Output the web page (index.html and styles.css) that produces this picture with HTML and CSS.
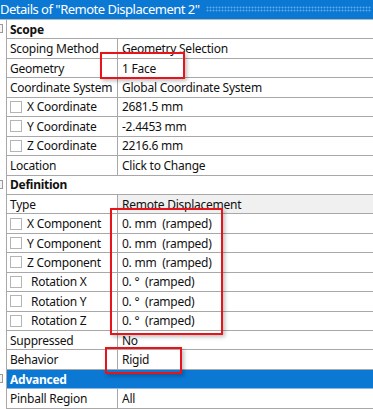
FILE: index.html
```html
<!DOCTYPE html>
<html lang="en">
<head>
  <meta charset="UTF-8" />
  <title>Details of "Remote Displacement 2"</title>
  <link rel="stylesheet" href="styles.css">
</head>
<body>

<div class="panel">
  <div class="titlebar">
    <span class="title">Details of "Remote Displacement 2"</span>
    <span class="grip"></span>
  </div>

  <div class="row group">
    <div class="gutter"><span class="toggle"></span></div>
    <div class="head">Scope</div>
  </div>
  <div class="row">
    <div class="gutter"></div>
    <div class="label">Scoping Method</div>
    <div class="value">Geometry Selection</div>
  </div>
  <div class="row">
    <div class="gutter"></div>
    <div class="label">Geometry</div>
    <div class="value">1 Face</div>
  </div>
  <div class="row">
    <div class="gutter"></div>
    <div class="label">Coordinate System</div>
    <div class="value">Global Coordinate System</div>
  </div>
  <div class="row">
    <div class="gutter"></div>
    <div class="label"><span class="check"></span>X Coordinate</div>
    <div class="value">2681.5 mm</div>
  </div>
  <div class="row">
    <div class="gutter"></div>
    <div class="label"><span class="check"></span>Y Coordinate</div>
    <div class="value">-2.4453 mm</div>
  </div>
  <div class="row">
    <div class="gutter"></div>
    <div class="label"><span class="check"></span>Z Coordinate</div>
    <div class="value">2216.6 mm</div>
  </div>
  <div class="row">
    <div class="gutter"></div>
    <div class="label">Location</div>
    <div class="value">Click to Change</div>
  </div>

  <div class="row group">
    <div class="gutter"><span class="toggle"></span></div>
    <div class="head">Definition</div>
  </div>
  <div class="row">
    <div class="gutter"></div>
    <div class="label">Type</div>
    <div class="value readonly">Remote Displacement</div>
  </div>
  <div class="row">
    <div class="gutter"></div>
    <div class="label"><span class="check"></span>X Component</div>
    <div class="value">0. mm&nbsp; (ramped)</div>
  </div>
  <div class="row">
    <div class="gutter"></div>
    <div class="label"><span class="check"></span>Y Component</div>
    <div class="value">0. mm&nbsp; (ramped)</div>
  </div>
  <div class="row">
    <div class="gutter"></div>
    <div class="label"><span class="check"></span>Z Component</div>
    <div class="value">0. mm&nbsp; (ramped)</div>
  </div>
  <div class="row">
    <div class="gutter"></div>
    <div class="label"><span class="check wide"></span>Rotation X</div>
    <div class="value">0. °&nbsp; (ramped)</div>
  </div>
  <div class="row">
    <div class="gutter"></div>
    <div class="label"><span class="check wide"></span>Rotation Y</div>
    <div class="value">0. °&nbsp; (ramped)</div>
  </div>
  <div class="row">
    <div class="gutter"></div>
    <div class="label"><span class="check wide"></span>Rotation Z</div>
    <div class="value">0. °&nbsp; (ramped)</div>
  </div>
  <div class="row">
    <div class="gutter"></div>
    <div class="label">Suppressed</div>
    <div class="value">No</div>
  </div>
  <div class="row">
    <div class="gutter"></div>
    <div class="label">Behavior</div>
    <div class="value">Rigid</div>
  </div>

  <div class="row group selected">
    <div class="gutter"><span class="toggle"></span></div>
    <div class="head">Advanced</div>
  </div>
  <div class="row">
    <div class="gutter"></div>
    <div class="label">Pinball Region</div>
    <div class="value">All</div>
  </div>

  <!-- annotation boxes -->
  <div class="mark mark-geometry"></div>
  <div class="mark mark-components"></div>
  <div class="mark mark-behavior"></div>
</div>

</body>
</html>
```

FILE: styles.css
```css
body {
  margin: 0;
  background: #ffffff;
  font-family: "Noto Sans", "Open Sans", sans-serif;
  font-size: 12px;
  letter-spacing: -0.25px;
  color: #111;
  overflow: hidden;
}
.panel {
  position: relative;
  width: 373px;
  height: 409px;
  overflow: hidden;
}
.titlebar {
  height: 19px;
  background: #0b78d4;
  border-bottom: 1px solid #b9b9b9;
  display: flex;
  align-items: center;
  color: white;
}
.title {
  font-size: 13px;
  letter-spacing: -0.5px;
  white-space: nowrap;
  margin-left: 0;
  margin-top: -1px;
}
.grip {
  flex: 1;
  height: 6px;
  margin: 0 2px 2px 6px;
  background-image: radial-gradient(circle, #5ea8e6 0.9px, transparent 1.1px);
  background-size: 3px 3px;
}
.row {
  display: flex;
  height: 19.45px;
}
.gutter {
  width: 6px;
  flex-shrink: 0;
  border-right: 1px solid #a8a8a8;
  position: relative;
}
.toggle {
  position: absolute;
  left: -6px;
  top: 4px;
  width: 9px;
  height: 9px;
  box-sizing: border-box;
  border: 1px solid #9a9a9a;
  background: #f4f4f4;
}
.label,
.value,
.head {
  box-sizing: border-box;
  border-bottom: 1px solid #a8a8a8;
  display: flex;
  align-items: center;
  white-space: nowrap;
  overflow: hidden;
}
.label {
  width: 111px;
  flex-shrink: 0;
  padding-left: 3px;
  border-right: 1px solid #a8a8a8;
}
.value {
  flex: 1;
  padding-left: 4px;
}
.value.readonly {
  background: #f0f0f0;
}
.head {
  flex: 1;
  padding-left: 3px;
  font-weight: bold;
}
.group.selected .head {
  background: #0b78d4;
  color: white;
  border-bottom-color: #8fb8de;
}
.check {
  width: 12px;
  height: 12px;
  box-sizing: border-box;
  border: 1px solid #b4b4b4;
  background: white;
  margin-left: 0;
  margin-right: 5px;
  flex-shrink: 0;
}
.check.wide {
  margin-right: 9px;
}
.mark {
  position: absolute;
  border: 2px solid #e8141b;
  box-shadow: 2px 2px 4px rgba(0, 0, 0, 0.25);
}
.mark-geometry {
  left: 100px;
  top: 52px;
  width: 81px;
  height: 23px;
}
.mark-components {
  left: 110px;
  top: 208px;
  width: 109px;
  height: 123px;
}
.mark-behavior {
  left: 105px;
  top: 347px;
  width: 73px;
  height: 23px;
}
```
